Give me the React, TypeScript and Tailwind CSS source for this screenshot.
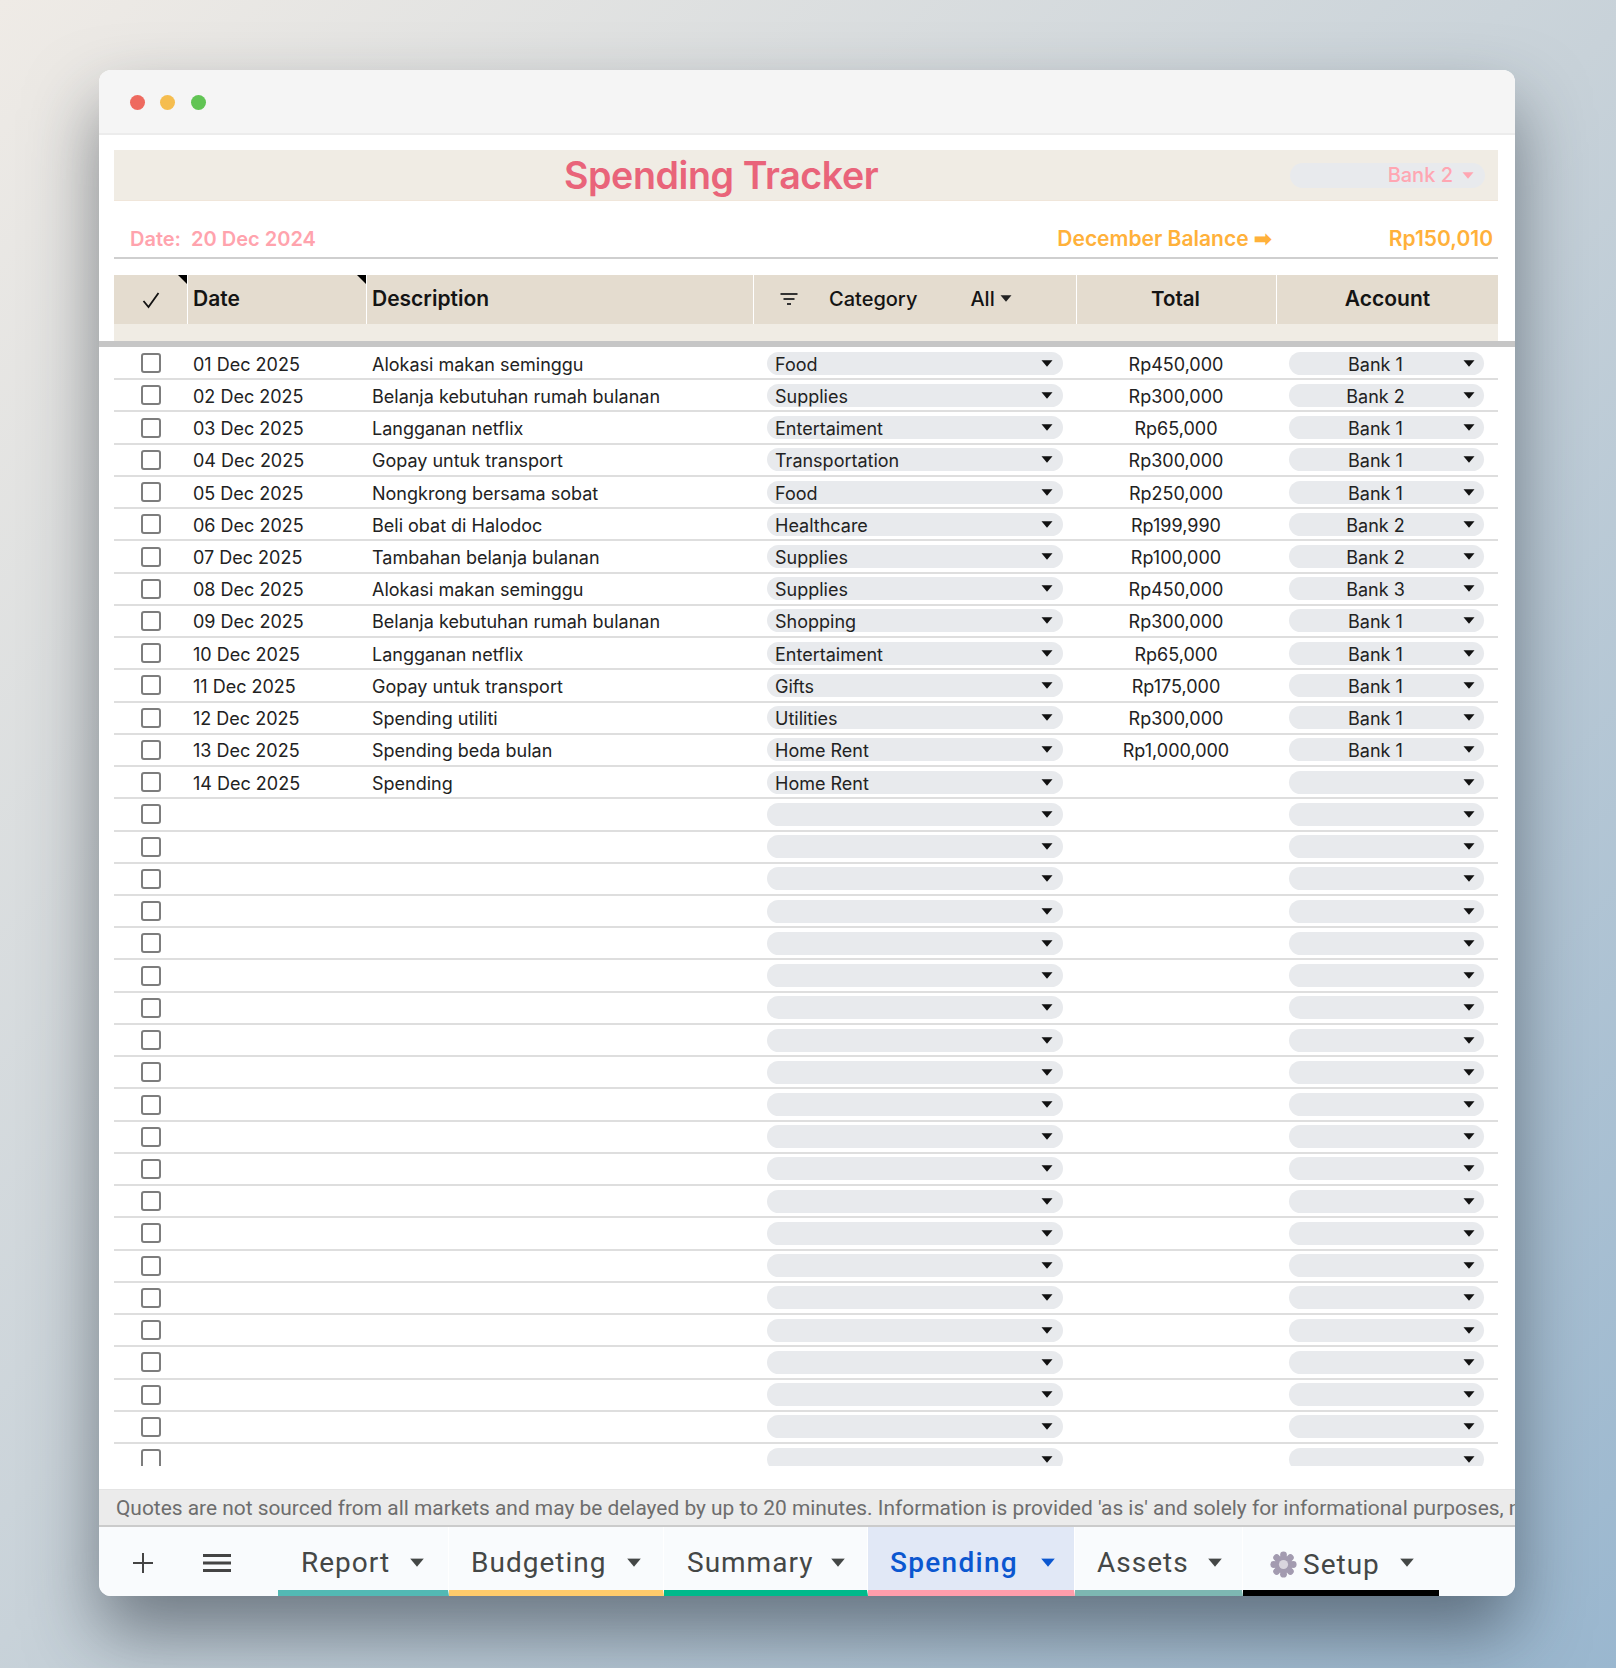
import React from "react";

const rows: [string, string, string, string, string][] = [
  ["01 Dec 2025", "Alokasi makan seminggu", "Food", "Rp450,000", "Bank 1"],
  ["02 Dec 2025", "Belanja kebutuhan rumah bulanan", "Supplies", "Rp300,000", "Bank 2"],
  ["03 Dec 2025", "Langganan netflix", "Entertaiment", "Rp65,000", "Bank 1"],
  ["04 Dec 2025", "Gopay untuk transport", "Transportation", "Rp300,000", "Bank 1"],
  ["05 Dec 2025", "Nongkrong bersama sobat", "Food", "Rp250,000", "Bank 1"],
  ["06 Dec 2025", "Beli obat di Halodoc", "Healthcare", "Rp199,990", "Bank 2"],
  ["07 Dec 2025", "Tambahan belanja bulanan", "Supplies", "Rp100,000", "Bank 2"],
  ["08 Dec 2025", "Alokasi makan seminggu", "Supplies", "Rp450,000", "Bank 3"],
  ["09 Dec 2025", "Belanja kebutuhan rumah bulanan", "Shopping", "Rp300,000", "Bank 1"],
  ["10 Dec 2025", "Langganan netflix", "Entertaiment", "Rp65,000", "Bank 1"],
  ["11 Dec 2025", "Gopay untuk transport", "Gifts", "Rp175,000", "Bank 1"],
  ["12 Dec 2025", "Spending utiliti", "Utilities", "Rp300,000", "Bank 1"],
  ["13 Dec 2025", "Spending beda bulan", "Home Rent", "Rp1,000,000", "Bank 1"],
  ["14 Dec 2025", "Spending", "Home Rent", "", ""],
];
const allRows = [...rows, ...Array.from({ length: 21 }, () => ["", "", "", "", ""] as [string, string, string, string, string])];

const Caret = ({ className = "" }: { className?: string }) => (
  <svg width="12" height="7" viewBox="0 0 12 7" className={className} fill="currentColor">
    <path d="M0.5 0.3 H11.5 L6 6.8 Z" />
  </svg>
);

const Gear = () => (
  <svg width="27" height="27" viewBox="0 0 27 27" className="shrink-0 mt-[4px]">
    {[0, 45, 90, 135, 180, 225, 270, 315].map((a) => (
      <circle key={a} cx="13.5" cy="3.8" r="3.4" fill="#a39bb0" transform={`rotate(${a} 13.5 13.5)`} />
    ))}
    <circle cx="13.5" cy="13.5" r="9" fill="#a39bb0" />
    <circle cx="13.5" cy="13.5" r="4.6" fill="#d9d5de" />
  </svg>
);

const tabs = [
  { name: "Report", w: "w-[171px]", strip: "border-b-[#52b9b4]", pl: "pl-[23px]", gap: "gap-[21px]" },
  { name: "Budgeting", w: "w-[215px]", strip: "border-b-[#ffcb6b]", pl: "pl-[22px]", gap: "gap-[22px]" },
  { name: "Summary", w: "w-[204px]", strip: "border-b-[#00b98b]", pl: "pl-[23px]", gap: "gap-[19px]" },
];

export default function App() {
  return (
    <div className="w-[1616px] h-[1668px] pl-[99px] pt-[70px] bg-[linear-gradient(135deg,#efebe6_0%,#c8d2d9_50%,#9ab7cf_100%)] font-['Inter',sans-serif] overflow-hidden">
      <div className="w-[1416px] h-[1526px] rounded-[12px] overflow-hidden bg-white flex flex-col shadow-[0_36px_70px_rgba(40,50,60,0.55)]">
        {/* title bar */}
        <div className="h-[65px] shrink-0 bg-[#f5f5f5] border-b-2 border-[#ececec] flex items-center gap-[15.3px] pl-[31px] pt-[1px]">
          <span className="w-[15px] h-[15px] rounded-full bg-[#ee6a5f]" />
          <span className="w-[15px] h-[15px] rounded-full bg-[#f5bd4f]" />
          <span className="w-[15px] h-[15px] rounded-full bg-[#61c454]" />
        </div>

        {/* heading band */}
        <div className="mt-[15px] ml-[15px] mr-[17px] h-[51px] shrink-0 bg-[#f0ece4] border-b border-[#f0e6da] flex items-center justify-between pr-[13px]">
          <div className="ml-[450px] pt-[2px] text-[37.6px] leading-none font-semibold text-[#e9647a] tracking-[-0.4px]">Spending Tracker</div>
          <div className="w-[195px] h-[25px] rounded-full bg-[#e8eaed] flex items-center justify-end gap-[9px] pr-[11px] text-[#ffa6b2] text-[20px] font-medium">
            <span>Bank 2</span>
            <Caret />
          </div>
        </div>

        {/* date and balance */}
        <div className="ml-[15px] mr-[17px] h-[58px] shrink-0 border-b-2 border-[#cfcfcf] flex items-center pt-[19px] text-[21px] font-semibold">
          <div className="ml-[16px] text-[20px] text-[#ffa3ad] whitespace-pre">Date:  20 Dec 2024</div>
          <div className="ml-auto text-[#ffb13a]">December Balance ➡</div>
          <div className="ml-[117px] mr-[5px] text-[#ffb13a]">Rp150,010</div>
        </div>

        {/* table head */}
        <div className="ml-[15px] mt-[16px] shrink-0 h-[49px] w-[1384px] grid grid-cols-[73px_179px_387px_323px_200px_222px] bg-[#e4dccf] text-[21px] font-semibold text-[#141414]">
          <div className="relative flex items-center justify-center">
            <svg width="20" height="20" viewBox="0 0 20 20" fill="none" stroke="#111" strokeWidth="1.8">
              <path d="M2.5 11 L7.5 17 L17.5 3" />
            </svg>
            <span className="absolute top-0 right-0 w-0 h-0 border-t-[9px] border-t-black border-l-[9px] border-l-transparent" />
          </div>
          <div className="relative border-l border-white flex items-center pl-[5px] pb-[1px]">
            Date
            <span className="absolute top-0 right-0 w-0 h-0 border-t-[9px] border-t-black border-l-[9px] border-l-transparent" />
          </div>
          <div className="border-l border-white flex items-center pl-[5px] pb-[1px]">Description</div>
          <div className="border-l border-white flex items-center font-medium text-[20px] pb-[2px]">
            <svg width="18" height="14" viewBox="0 0 18 14" fill="#333" className="ml-[26px]">
              <rect x="0.5" y="1" width="17" height="2" />
              <rect x="3.5" y="6" width="11" height="2" />
              <rect x="7" y="11" width="4" height="2" />
            </svg>
            <span className="ml-[31px]">Category</span>
            <span className="ml-[53px]">All</span>
            <Caret className="ml-[5px] text-[#222]" />
          </div>
          <div className="border-l border-white flex items-center justify-center pr-[2px] text-[20.5px]">Total</div>
          <div className="border-l border-white flex items-center justify-center pb-[1px]">Account</div>
        </div>
        <div className="ml-[15px] h-[17px] shrink-0 w-[1384px] bg-[#f0ece4]" />
        <div className="h-[6px] shrink-0 bg-[#c6c6c6]" />

        {/* table body */}
        <div className="h-[1119px] pt-[1px] shrink-0 overflow-hidden">
          {allRows.map((r, i) => (
            <div
              key={i}
              className="ml-[15px] w-[1384px] h-[32.24px] border-b-2 border-[#dedede] grid grid-cols-[73px_179px_387px_323px_200px_222px] items-center text-[18px] text-[#222] whitespace-nowrap"
            >
              <div className="flex justify-center">
                <span className="w-[20px] h-[20px] rounded-[3px] border-2 border-[#7d7d7d]" />
              </div>
              <div className="pl-[6px] pt-[2px]">{r[0]}</div>
              <div className="pl-[6px] pt-[2px]">{r[1]}</div>
              <div className="pl-[14px]">
                <div className="w-[296px] h-[23px] rounded-full bg-[#e8eaed] flex items-center justify-between pl-[8px] pr-[10px]">
                  <span className="pt-[2px]">{r[2]}</span>
                  <Caret className="text-[#111]" />
                </div>
              </div>
              <div className="text-center pt-[2px]">{r[3]}</div>
              <div className="pl-[13px]">
                <div className="relative w-[195px] h-[23px] rounded-full bg-[#e8eaed] flex items-center justify-center pr-[22px]">
                  <span className="pt-[2px]">{r[4]}</span>
                  <Caret className="absolute right-[9px] top-[8px] text-[#111]" />
                </div>
              </div>
            </div>
          ))}
        </div>

        <div className="h-[23px] shrink-0" />

        {/* notice */}
        <div className="h-[38px] shrink-0 bg-[#ebebeb] border-t border-[#e4e4e4] border-b-2 border-b-[#cbcbcb] flex items-center pl-[17px] pt-[3px] font-['Roboto',sans-serif] text-[20.9px] text-[#6d6d6d] whitespace-nowrap overflow-hidden">
          Quotes are not sourced from all markets and may be delayed by up to 20 minutes. Information is provided 'as is' and solely for informational purposes, not for trading purposes or advice.
        </div>

        {/* tabs */}
        <div className="flex-1 bg-[#f9fbfd] flex font-['Roboto',sans-serif] text-[28px] tracking-[1px] text-[#444746]">
          <div className="w-[179px] shrink-0 flex items-center pt-[3px] text-[#444]">
            <svg width="22" height="22" viewBox="0 0 22 22" fill="#444" className="ml-[33px]">
              <rect x="10" y="1" width="2" height="20" />
              <rect x="1" y="10" width="20" height="2" />
            </svg>
            <svg width="28" height="20" viewBox="0 0 28 20" fill="#444" className="ml-[49px]">
              <rect y="1" width="28" height="3" />
              <rect y="8.5" width="28" height="3" />
              <rect y="16" width="28" height="3" />
            </svg>
          </div>
          {tabs.map((t) => (
            <div key={t.name} className={`${t.w} ${t.pl} ${t.gap} ${t.strip} shrink-0 border-r border-r-white border-b-[6px] flex items-center pt-[8px]`}>
              <span>{t.name}</span>
              <Caret className="scale-125 text-[#444746]" />
            </div>
          ))}
          <div className="w-[207px] shrink-0 pl-[22px] gap-[24px] bg-[#e1e8f6] border-r border-r-white border-b-[6px] border-b-[#ff9dab] flex items-center text-[#0b57d0] font-medium pt-[8px] tracking-[1.3px]">
            <span>Spending</span>
            <Caret className="scale-125" />
          </div>
          <div className="w-[168px] shrink-0 pl-[22px] gap-[20px] border-r border-r-white border-b-[6px] border-b-[#7db7b2] flex items-center pt-[8px]">
            <span>Assets</span>
            <Caret className="scale-125 text-[#444746]" />
          </div>
          <div className="w-[196px] shrink-0 pl-[27px] border-b-[6px] border-b-black flex items-center pt-[8px]">
            <Gear />
            <span className="ml-[6px] mt-[4px]">Setup</span>
            <Caret className="scale-125 ml-[21px]" />
          </div>
        </div>
      </div>
    </div>
  );
}
